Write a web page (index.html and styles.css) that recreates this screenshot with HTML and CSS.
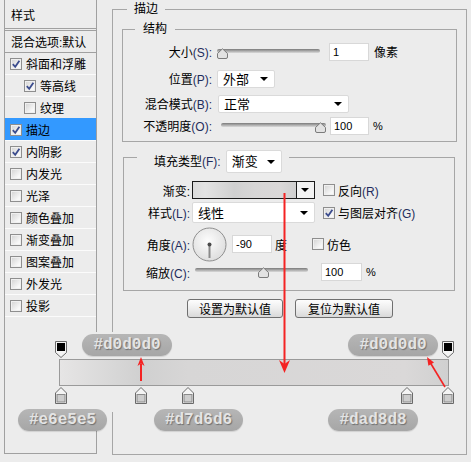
FILE: index.html
```html
<!DOCTYPE html>
<html lang="zh-CN">
<head>
  <meta charset="UTF-8" />
  <title>图层样式 - 描边</title>
  <link rel="stylesheet" href="styles.css">
</head>
<body>
  <div class="dialog">
    <ul class="style-list">
      <li class="list-head">样式</li>
      <li class="list-blend">混合选项:默认</li>
      <li><span class="check on"><svg viewBox="0 0 10 10"><path d="M1.8 5.2L4.2 7.8L8.4 1.8"/></svg></span>斜面和浮雕</li>
      <li class="sub"><span class="check on"><svg viewBox="0 0 10 10"><path d="M1.8 5.2L4.2 7.8L8.4 1.8"/></svg></span>等高线</li>
      <li class="sub"><span class="check"></span>纹理</li>
      <li class="active"><span class="check on"><svg viewBox="0 0 10 10"><path d="M1.8 5.2L4.2 7.8L8.4 1.8"/></svg></span>描边</li>
      <li><span class="check on"><svg viewBox="0 0 10 10"><path d="M1.8 5.2L4.2 7.8L8.4 1.8"/></svg></span>内阴影</li>
      <li><span class="check"></span>内发光</li>
      <li><span class="check"></span>光泽</li>
      <li><span class="check"></span>颜色叠加</li>
      <li><span class="check"></span>渐变叠加</li>
      <li><span class="check"></span>图案叠加</li>
      <li><span class="check"></span>外发光</li>
      <li><span class="check"></span>投影</li>
    </ul>

    <fieldset class="group stroke">
      <legend>描边</legend>

      <fieldset class="group structure">
        <legend>结构</legend>
        <div class="row r-size">
          <span class="lbl">大小<em>(S):</em></span>
          <div class="slider s-size" style="--pos: 0">
            <span class="track"></span>
            <svg class="thumb" viewBox="0 0 11 11"><path d="M0.5 5.5L5.5 0.8L10.5 5.5V9a1.5 1.5 0 0 1-1.5 1.5H2A1.5 1.5 0 0 1 0.5 9Z"/></svg>
          </div>
          <span class="num n-size">1</span>
          <span class="unit">像素</span>
        </div>
        <div class="row r-pos">
          <span class="lbl">位置<em>(P):</em></span>
          <span class="select sel-pos">外部</span>
        </div>
        <div class="row r-blend">
          <span class="lbl">混合模式<em>(B):</em></span>
          <span class="select sel-blend">正常</span>
        </div>
        <div class="row r-opacity">
          <span class="lbl">不透明度<em>(O):</em></span>
          <div class="slider s-opacity" style="--pos: 1">
            <span class="track"></span>
            <svg class="thumb" viewBox="0 0 11 11"><path d="M0.5 5.5L5.5 0.8L10.5 5.5V9a1.5 1.5 0 0 1-1.5 1.5H2A1.5 1.5 0 0 1 0.5 9Z"/></svg>
          </div>
          <span class="num n-opacity">100</span>
          <span class="unit pct">%</span>
        </div>
      </fieldset>

      <fieldset class="group fill">
        <legend class="fill-head">
          <span class="lbl">填充类型<em>(F):</em></span>
          <span class="select sel-type">渐变</span>
        </legend>
        <div class="row r-grad">
          <span class="lbl">渐变:</span>
          <div class="picker">
            <span class="preview"></span>
            <span class="drop"></span>
          </div>
          <span class="opt o-reverse"><span class="check"></span><span>反向<em>(R)</em></span></span>
        </div>
        <div class="row r-style">
          <span class="lbl">样式<em>(L):</em></span>
          <span class="select sel-style">线性</span>
          <span class="opt o-align"><span class="check on"><svg viewBox="0 0 10 10"><path d="M1.8 5.2L4.2 7.8L8.4 1.8"/></svg></span><span>与图层对齐<em>(G)</em></span></span>
        </div>
        <div class="row r-angle">
          <span class="lbl">角度<em>(A):</em></span>
          <svg class="dial" viewBox="0 0 35 35">
            <defs>
              <radialGradient id="dialFace" cx="45%" cy="40%" r="60%">
                <stop offset="0" stop-color="#fdfdfd"/>
                <stop offset="1" stop-color="#dedede"/>
              </radialGradient>
            </defs>
            <circle cx="17.5" cy="17.5" r="16.5" fill="url(#dialFace)" stroke="#8e8e8e"/>
            <line x1="17.5" y1="17.5" x2="17.5" y2="31" stroke="#8a8a8a" stroke-width="2"/>
            <circle cx="17.5" cy="17.5" r="2" fill="#4a4a4a"/>
          </svg>
          <span class="num n-angle">-90</span>
          <span class="unit">度</span>
          <span class="opt o-dither"><span class="check"></span><span>仿色</span></span>
        </div>
        <div class="row r-scale">
          <span class="lbl">缩放<em>(C):</em></span>
          <div class="slider s-scale" style="--pos: 0.62">
            <span class="track"></span>
            <svg class="thumb" viewBox="0 0 11 11"><path d="M0.5 5.5L5.5 0.8L10.5 5.5V9a1.5 1.5 0 0 1-1.5 1.5H2A1.5 1.5 0 0 1 0.5 9Z"/></svg>
          </div>
          <span class="num n-scale">100</span>
          <span class="unit pct">%</span>
        </div>
      </fieldset>

      <div class="buttons">
        <button class="btn b-set">设置为默认值</button>
        <button class="btn b-reset">复位为默认值</button>
      </div>
    </fieldset>
  </div>

  <!-- gradient ramp with its stops and colour callouts -->
  <div class="ramp">
    <div class="ramp-bar"></div>

    <svg class="stop top" style="left: 5px" viewBox="0 0 12 17"><path d="M0.5 0.5H11.5V11.5L6 16.5L0.5 11.5Z"/><rect x="2" y="2" width="8" height="8"/></svg>
    <svg class="stop top" style="left: 392px" viewBox="0 0 12 17"><path d="M0.5 0.5H11.5V11.5L6 16.5L0.5 11.5Z"/><rect x="2" y="2" width="8" height="8"/></svg>

    <svg class="stop bottom" style="left: 5px" viewBox="0 0 12 17"><path d="M0.5 16.5V6L6 0.5L11.5 6V16.5Z"/><rect x="2" y="7.5" width="8" height="7.5"/></svg>
    <svg class="stop bottom" style="left: 85px" viewBox="0 0 12 17"><path d="M0.5 16.5V6L6 0.5L11.5 6V16.5Z"/><rect x="2" y="7.5" width="8" height="7.5"/></svg>
    <svg class="stop bottom" style="left: 132px" viewBox="0 0 12 17"><path d="M0.5 16.5V6L6 0.5L11.5 6V16.5Z"/><rect x="2" y="7.5" width="8" height="7.5"/></svg>
    <svg class="stop bottom" style="left: 351px" viewBox="0 0 12 17"><path d="M0.5 16.5V6L6 0.5L11.5 6V16.5Z"/><rect x="2" y="7.5" width="8" height="7.5"/></svg>
    <svg class="stop bottom" style="left: 392px" viewBox="0 0 12 17"><path d="M0.5 16.5V6L6 0.5L11.5 6V16.5Z"/><rect x="2" y="7.5" width="8" height="7.5"/></svg>

    <span class="pill p-top-left">#d0d0d0</span>
    <span class="pill p-top-right">#d0d0d0</span>
    <span class="pill p-bottom-a">#e6e5e5</span>
    <span class="pill p-bottom-b">#d7d6d6</span>
    <span class="pill p-bottom-c">#dad8d8</span>
  </div>

  <svg class="marks" viewBox="0 0 471 462">
    <line x1="284.5" y1="193" x2="284.5" y2="364" stroke-width="2"/>
    <path d="M279 360L284.5 364L290 360L284.5 373Z"/>
    <line x1="141" y1="381" x2="141" y2="364" stroke-width="2"/>
    <path d="M137.5 366L141 363.5L144.5 366L141 357Z"/>
    <line x1="445" y1="387" x2="430.5" y2="363" stroke-width="1.6"/>
    <path d="M427 357L434 362.6L428.4 365.8Z"/>
  </svg>
</body>
</html>
```

FILE: styles.css
```css
* {
  box-sizing: border-box;
}

body {
  position: relative;
  width: 471px;
  height: 462px;
  margin: 0;
  overflow: hidden;
  background: #ececec;
  color: #000;
  font: 12px "Liberation Sans", "Noto Sans CJK SC", sans-serif;
}

em {
  font-style: normal;
  color: #1f2d5c;
}

.dialog {
  display: flex;
  padding-left: 4px;
}

/* left column: list of layer effects */
.style-list {
  flex: none;
  width: 93px;
  height: 454px;
  margin: 0;
  padding: 0;
  list-style: none;
  border: 1px solid #a0a0a0;
  border-top: 0;
}

.style-list li {
  display: flex;
  align-items: center;
  gap: 4px;
  height: 22px;
  padding-left: 5px;
  border-bottom: 1px solid #fbfbfb;
  white-space: nowrap;
}

.style-list .list-head {
  height: 31px;
  padding-left: 6px;
  border-bottom: 3px double #a0a0a0;
}

.style-list .list-blend {
  padding-left: 6px;
  border-bottom-color: #a0a0a0;
}

.style-list .sub {
  padding-left: 19px;
}

.style-list .active {
  background: #3399ff;
  box-shadow: 0 -1px 0 #3399ff;
}

.check {
  flex: none;
  display: flex;
  align-items: center;
  justify-content: center;
  width: 12px;
  height: 12px;
  border: 1px solid #8e8e8e;
  background: linear-gradient(135deg, #d2d2d2, #f8f8f8 75%);
  box-shadow: inset 0 0 0 1px #f0f0f0;
}

.check svg {
  width: 10px;
  height: 10px;
  fill: none;
  stroke: #3c4d8e;
  stroke-width: 1.8;
}

/* group boxes */
.group {
  min-width: 0;
  margin: 0;
  padding: 0;
  border: 1px solid #a6a6a6;
}

.group > legend {
  padding: 0 7px;
  line-height: 18px;
}

.stroke {
  flex: none;
  width: 355px;
  height: 455px;
  margin-left: 15px;
}

.stroke > legend {
  margin-left: 14px;
}

.structure {
  margin: 2px 9px 0;
  padding-bottom: 5px;
}

.structure > legend {
  margin-left: 12px;
  padding: 0 8px;
}

.fill {
  margin: 0 11px 0 10px;
  padding-bottom: 9px;
}

.fill > .fill-head {
  display: flex;
  align-items: center;
  margin-left: 13px;
  padding: 8px 7px 0 17px;
}

/* form rows */
.row {
  display: flex;
  align-items: center;
  white-space: nowrap;
}

.lbl {
  flex: none;
  text-align: right;
  white-space: nowrap;
}

.structure .lbl {
  width: 89px;
}

.fill .row .lbl {
  width: 66px;
}

.r-size { height: 27px; }
.r-pos { height: 27px; }
.r-blend { height: 23px; }
.r-opacity { height: 21px; }

.r-grad { height: 18px; margin-top: 8px; }
.r-style { height: 21px; margin-top: 3px; }
.r-angle { height: 34px; margin-top: 4px; }
.r-scale { height: 18px; margin-top: 2px; }

.select {
  position: relative;
  flex: none;
  display: flex;
  align-items: center;
  height: 18px;
  padding-left: 5px;
  background: #fff;
  border: 1px solid #dadada;
  border-radius: 2px;
  font-size: 13px;
}

.select::after {
  content: "";
  position: absolute;
  right: 6px;
  top: 50%;
  margin-top: -2px;
  border-left: 4px solid transparent;
  border-right: 4px solid transparent;
  border-top: 4px solid #000;
}

.sel-pos { width: 58px; margin-left: 5px; }
.sel-blend { width: 131px; margin-left: 6px; }
.sel-type { width: 56px; height: 23px; margin-left: 5px; }
.sel-style { width: 123px; height: 21px; margin-left: 2px; }

.num {
  flex: none;
  display: flex;
  align-items: center;
  height: 18px;
  padding-left: 3px;
  background: #fff;
  border: 1px solid #d8d8d8;
  font-size: 11px;
}

.n-size { width: 40px; margin-left: 9px; }
.n-opacity { width: 39px; margin-left: 4px; }
.n-angle { width: 40px; margin-left: 5px; }
.n-scale { width: 41px; margin-left: 13px; }

.unit { margin-left: 5px; }
.n-opacity + .unit { margin-left: 4px; }
.n-angle + .unit { margin-left: 3px; }
.n-scale + .unit { margin-left: 4px; }

.pct {
  font-size: 11px;
}

/* sliders: a rounded track with a house-shaped thumb */
.slider {
  position: relative;
  flex: none;
  height: 12px;
  margin-top: 4px;
}

.slider .track {
  display: block;
  height: 4px;
  margin-top: 1px;
  border-radius: 2px;
  background: linear-gradient(#7a7a7a, #b4b4b4 60%, #dadada);
}

.slider .thumb {
  position: absolute;
  top: 0;
  left: calc((100% - 11px) * var(--pos));
  width: 11px;
  height: 11px;
  fill: #e2e2e2;
  stroke: #7b7b7b;
}

.s-size { width: 103px; margin-left: 5px; }
.s-opacity { width: 105px; margin-left: 9px; }
.s-scale { width: 113px; margin-left: 5px; margin-top: 2px; }

/* gradient picker */
.picker {
  flex: none;
  display: flex;
  width: 123px;
  height: 18px;
  margin-left: 2px;
  border: 1px solid #1b1b1b;
  background: #f3f3f3;
}

.picker .preview {
  flex: 1;
  border-right: 1px solid #1b1b1b;
  background: linear-gradient(90deg, #dcdcdc, #e3e3e3 12%, #d0d0d0 40%, #d7d6d6 60%, #dad8d8 85%, #cfcfcf);
}

.picker .drop {
  position: relative;
  width: 17px;
}

.picker .drop::after {
  content: "";
  position: absolute;
  left: 4px;
  top: 6px;
  border-left: 4px solid transparent;
  border-right: 4px solid transparent;
  border-top: 4px solid #000;
}

.opt {
  display: flex;
  align-items: center;
  gap: 3px;
}

.o-reverse,
.o-align {
  margin-left: 8px;
}

.o-dither {
  margin-left: 25px;
}

.dial {
  flex: none;
  width: 35px;
  height: 35px;
  margin-left: 2px;
}

.buttons {
  display: flex;
  gap: 12px;
  margin-top: 8px;
  padding-left: 74px;
}

.btn {
  height: 19px;
  padding: 0;
  border: 1px solid #6f6f6f;
  border-radius: 3px;
  background: linear-gradient(#fdfdfd, #ededed 50%, #d9d9d9);
  color: #000;
  font: 12px "Liberation Sans", "Noto Sans CJK SC", sans-serif;
}

.b-set { width: 96px; }
.b-reset { width: 98px; }

/* gradient ramp below the dialog */
.ramp {
  position: absolute;
  left: 50px;
  top: 332px;
  width: 408px;
  height: 80px;
  background: #ececec;
}

.ramp-bar {
  position: absolute;
  left: 9px;
  top: 27px;
  width: 390px;
  height: 27px;
  border: 1px solid #9a9a9a;
  background: linear-gradient(90deg, #e6e5e5, #d0d0d0 21%, #d7d6d6 33%, #dad8d8 89%, #d0d0d0);
}

.stop {
  position: absolute;
  width: 12px;
  height: 17px;
}

.stop path {
  fill: #f4f4f4;
  stroke: #6a6a6a;
}

.stop.top {
  top: 9px;
}

.stop.top rect {
  fill: #000;
}

.stop.bottom {
  top: 55px;
}

.stop.bottom rect {
  fill: #cdcdcd;
  stroke: #8a8a8a;
}

.pill {
  position: absolute;
  width: 90px;
  height: 22px;
  border-radius: 11px;
  background: linear-gradient(#b6b6b6, #a6a6a6);
  box-shadow: 0 1px 1px rgba(0, 0, 0, 0.12);
  color: #e4e4e4;
  font: bold 16px/22px "Liberation Mono", monospace;
  text-align: center;
  text-shadow: 1px 1px 1px rgba(0, 0, 0, 0.35);
}

.p-top-left { left: 32px; top: 2px; }
.p-top-right { left: 298px; top: 2px; }
.p-bottom-a { left: -32px; top: 77px; width: 89px; }
.p-bottom-b { left: 104px; top: 77px; width: 89px; }
.p-bottom-c { left: 278px; top: 77px; }

/* red guide arrows drawn over everything */
.marks {
  position: absolute;
  left: 0;
  top: 0;
  width: 471px;
  height: 462px;
  pointer-events: none;
  fill: #f42323;
  stroke: #f42323;
}

.marks path {
  stroke: none;
}
```
